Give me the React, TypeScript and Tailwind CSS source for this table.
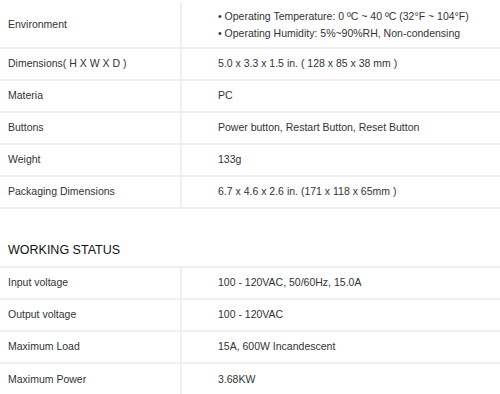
import React from "react";

const font = { fontFamily: '"Liberation Sans", Arial, sans-serif' };

type Row = { label: string; value: React.ReactNode; tall?: boolean };

function SpecRow({ label, value, tall, last }: Row & { last?: boolean }) {
  return (
    <div
      className={`grid grid-cols-[180px_1fr] ${last ? "" : "border-b-2 border-[#efefef]"} ${tall ? "h-[49px] pt-[2px]" : "h-[32px]"}`}
    >
      <div className="flex items-center pl-2 text-[10.5px] text-[#333]">{label}</div>
      <div className="flex items-center border-l-2 border-[#efefef] pl-[36px] text-[10.5px] text-[#333]">
        {value}
      </div>
    </div>
  );
}

export default function App() {
  const top: Row[] = [
    {
      label: "Environment",
      tall: true,
      value: (
        <div className="flex flex-col leading-[17px]">
          <span>• Operating Temperature: 0 ºC ~ 40 ºC (32°F ~ 104°F)</span>
          <span>• Operating Humidity: 5%~90%RH, Non-condensing</span>
        </div>
      ),
    },
    { label: "Dimensions( H X W X D )", value: "5.0 x 3.3 x 1.5 in. ( 128 x 85 x 38 mm )" },
    { label: "Materia", value: "PC" },
    { label: "Buttons", value: "Power button, Restart Button, Reset Button" },
    { label: "Weight", value: "133g" },
    { label: "Packaging Dimensions", value: "6.7 x 4.6 x 2.6 in. (171 x 118 x 65mm )" },
  ];
  const working: Row[] = [
    { label: "Input voltage", value: "100 - 120VAC, 50/60Hz, 15.0A" },
    { label: "Output voltage", value: "100 - 120VAC" },
    { label: "Maximum Load", value: "15A, 600W Incandescent" },
    { label: "Maximum Power", value: "3.68KW" },
  ];
  return (
    <div className="w-[500px] h-[394px] overflow-hidden bg-white" style={font}>
      <div className="flex flex-col">
        {top.map((r) => (
          <SpecRow key={r.label} {...r} />
        ))}
      </div>
      <div className="mt-[31px] mb-[6px] pl-2 text-[12.5px] leading-[20px] text-[#111]">WORKING STATUS</div>
      <div className="flex flex-col border-t-2 border-[#efefef]">
        {working.map((r, i) => (
          <SpecRow key={r.label} {...r} last={i === working.length - 1} />
        ))}
      </div>
    </div>
  );
}
